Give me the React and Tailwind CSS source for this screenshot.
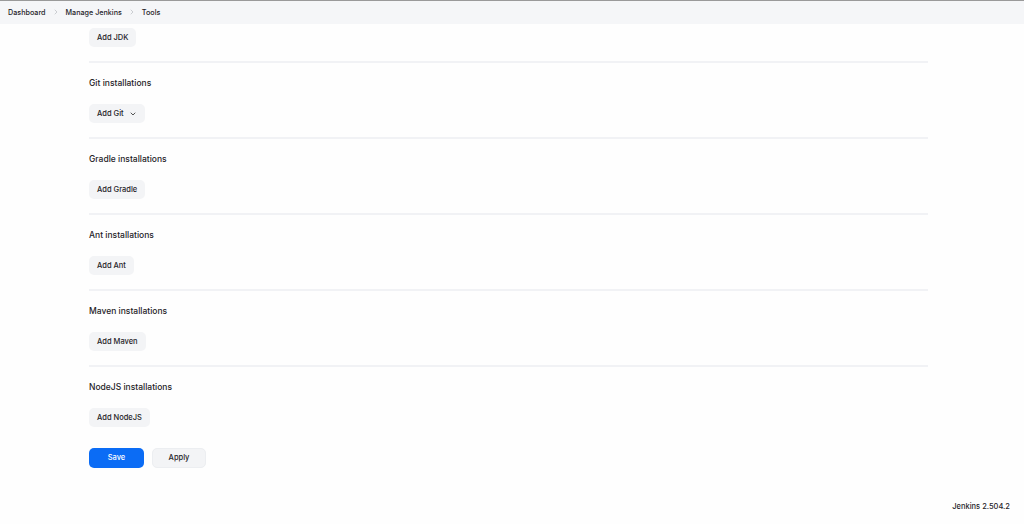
import { ChevronDown, ChevronRight } from "lucide-react";

const sections = [
  { title: "Git installations", label: "Add Git", menu: true },
  { title: "Gradle installations", label: "Add Gradle" },
  { title: "Ant installations", label: "Add Ant" },
  { title: "Maven installations", label: "Add Maven" },
  { title: "NodeJS installations", label: "Add NodeJS" },
];

function AddButton({ label, menu }) {
  return (
    <button className="flex h-[19px] items-center gap-[5px] rounded-[5px] bg-[#f3f4f6] px-[8px] text-[7.5px] font-medium text-[#1f2328]">
      {label}
      {menu ? <ChevronDown size={8} strokeWidth={2.5} className="text-[#333]" /> : null}
    </button>
  );
}

export default function App() {
  return (
    <div className="flex h-[524px] w-[1024px] flex-col bg-[#fefefe] font-['Inter',sans-serif] text-[#1f2328]">
      <nav className="flex h-[24px] items-center gap-[6px] border-t border-[#9a9a9a] bg-[#f5f6f8] px-[8px] text-[7.2px] font-medium leading-[10px]">
        <span>Dashboard</span>
        <ChevronRight size={8} strokeWidth={1.5} className="-translate-y-[1px] text-[#a0a4ab]" />
        <span>Manage Jenkins</span>
        <ChevronRight size={8} strokeWidth={1.5} className="-translate-y-[1px] text-[#a0a4ab]" />
        <span>Tools</span>
      </nav>

      <main className="flex w-[928px] flex-col pl-[89px] pt-[4px]">
        <div className="pb-[14px]">
          <AddButton label="Add JDK" />
        </div>
        {sections.map((s) => (
          <section key={s.title} className="border-t-2 border-[#f1f2f5]">
            <h2 className="pt-[14px] text-[8.5px] font-medium leading-[12px]">{s.title}</h2>
            <div className="pb-[14px] pt-[15px]">
              <AddButton label={s.label} menu={s.menu} />
            </div>
          </section>
        ))}
        <div className="mt-[7px] flex gap-[8px]">
          <button className="h-[20px] w-[55px] rounded-[5px] bg-[#0b6cf5] text-[7.5px] font-medium text-white">
            Save
          </button>
          <button className="h-[20px] w-[54px] rounded-[5px] border border-[#eceef1] bg-[#f3f4f6] text-[7.5px] font-medium">
            Apply
          </button>
        </div>
      </main>

      <footer className="mt-auto flex justify-end pb-[12px] pr-[14px] text-[7.5px] font-medium">
        Jenkins 2.504.2
      </footer>
    </div>
  );
}
